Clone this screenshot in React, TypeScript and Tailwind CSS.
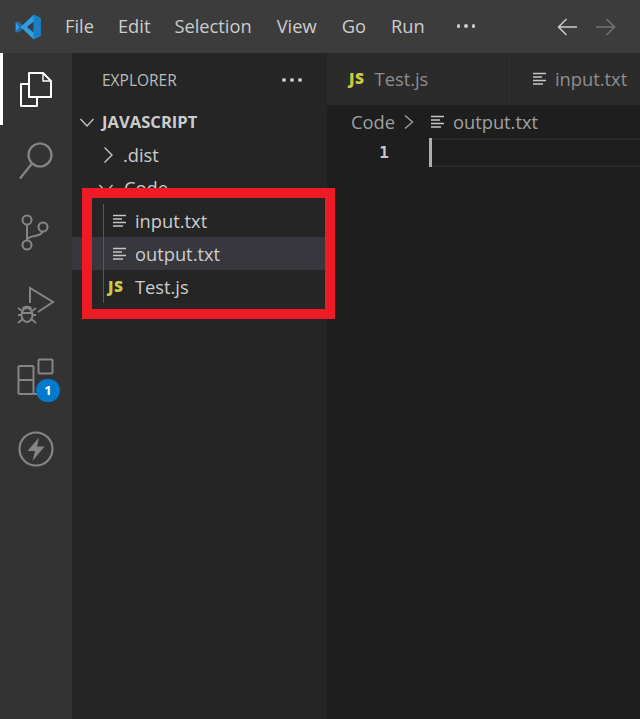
const font = "[font-family:'Open_Sans','Noto_Sans',sans-serif]";

function TextFileIcon({ className = "" }: { className?: string }) {
  return (
    <svg width="14" height="14" viewBox="0 0 14 14" className={className} fill="none" stroke="#c5c5c5" strokeWidth="1.7">
      <path d="M0 1.5H13M0 5H9M0 8.5H13M0 12H10" />
    </svg>
  );
}

function JsIcon() {
  return (
    <span className="text-[15.5px] leading-none font-extrabold text-[#cbcb41] tracking-[0.6px]">JS</span>
  );
}

function Chevron({ open }: { open?: boolean }) {
  return (
    <svg width="16" height="16" viewBox="0 0 16 16" fill="none" stroke="#c5c5c5" strokeWidth="1.4">
      {open ? <path d="M1.5 5l6.5 7 6.5-7" /> : <path d="M3.5 0.5l7.5 7.5-7.5 7.5" />}
    </svg>
  );
}

function VsLogo() {
  return (
    <svg width="26" height="26" viewBox="0 0 26 26">
      <path d="M18.5 0.8L25.5 4V22L18.5 25.2L7.5 14.8L2.8 18.6L0.6 17.4V8.6L2.8 7.4L7.5 11.2ZM18.7 7.4L11.8 13L18.7 18.6Z" fill="#2f9fe3" fillRule="evenodd" />
      <path d="M18.5 0.8L25.5 4V22L18.5 25.2V18.8L18.7 18.6V7.4L18.5 7.2Z" fill="#1a7fc9" />
      <path d="M2.8 7.4L0.6 8.6L4.5 13L0.6 17.4L2.8 18.6L7.5 14.8L5.6 13L7.5 11.2Z" fill="#1b6fb0" />
    </svg>
  );
}

function ActivityBar() {
  const stroke = "#858585";
  return (
    <div className="w-[72px] shrink-0 bg-[#333333] flex flex-col items-center relative">
      <div className="absolute left-0 top-0 w-[3px] h-[72px] bg-white" />
      <div className="h-[72px] w-full shrink-0 flex items-center justify-center">
        <svg width="34" height="36" viewBox="0 0 34 36" fill="none" stroke="#ffffff" strokeWidth="2" strokeLinejoin="round">
          <path d="M10 2H24L32 10V26H10Z" />
          <path d="M24 2V10H32" strokeWidth="1.4" />
          <path d="M10 13H2V35H18V26" />
        </svg>
      </div>
      <div className="h-[72px] w-full shrink-0 flex items-center justify-center">
        <svg width="36" height="38" viewBox="0 0 36 38" fill="none" stroke={stroke} strokeWidth="2.2">
          <circle cx="22" cy="13" r="11.5" />
          <path d="M14 21.5L2 36.5" />
        </svg>
      </div>
      <div className="h-[72px] w-full shrink-0 flex items-center justify-center">
        <svg width="30" height="38" viewBox="0 0 30 38" fill="none" stroke={stroke} strokeWidth="2">
          <circle cx="6" cy="6" r="4.5" />
          <circle cx="6" cy="31" r="4.5" />
          <circle cx="22" cy="13" r="4.5" />
          <path d="M6 10.5V26.5M6 26C8 20 20 24 21.5 17.5" />
        </svg>
      </div>
      <div className="h-[72px] w-full shrink-0 flex items-center justify-center">
        <svg width="38" height="40" viewBox="0 0 38 40" fill="none" stroke={stroke} strokeWidth="2">
          <path d="M13 18V3L36 17L21 27" />
          <ellipse cx="10" cy="30" rx="5.5" ry="7" />
          <path d="M4.5 28H15.5M1 23L5 26M19 23L15 26M1 30H4.5M15.5 30H19M1 38L5 34.5M19 38L15 34.5M6 24C6 21 14 21 14 24" strokeWidth="1.8" />
        </svg>
      </div>
      <div className="h-[72px] w-full shrink-0 flex items-center justify-center relative">
        <svg width="38" height="38" viewBox="0 0 38 38" fill="none" stroke={stroke} strokeWidth="2">
          <rect x="1.5" y="8" width="15" height="14" rx="1" />
          <rect x="1.5" y="22" width="15" height="14" rx="1" />
          <path d="M16.5 36H24" />
          <rect x="21.5" y="1.5" width="14" height="14" rx="1" />
        </svg>
        <span className="absolute left-[36px] top-[38px] w-[24px] h-[23px] rounded-full bg-[#007acc] flex items-center justify-center text-white text-[13px] font-bold leading-none">1</span>
      </div>
      <div className="h-[72px] w-full shrink-0 flex items-center justify-center">
        <svg width="36" height="36" viewBox="0 0 36 36" fill="none">
          <circle cx="18" cy="18" r="16.5" stroke={stroke} strokeWidth="2.2" />
          <path d="M21 6.5L9.5 20H17L14.5 30L26.5 15.5H19Z" fill={stroke} />
        </svg>
      </div>
    </div>
  );
}

function Row({ children, active, pad }: { children: React.ReactNode; active?: boolean; pad: string }) {
  return (
    <div className={`h-[33px] flex items-center ${pad} ${active ? "bg-[#37373d]" : ""}`}>{children}</div>
  );
}

function FileRow({ icon, name, active }: { icon: React.ReactNode; name: string; active?: boolean }) {
  return (
    <Row active={active} pad="pl-[36px]">
      <div className="w-[27px] flex justify-start">{icon}</div>
      <span className="text-[18.3px] text-[#cccccc]">{name}</span>
    </Row>
  );
}

function Sidebar() {
  return (
    <div className="w-[255px] shrink-0 bg-[#252526] flex flex-col">
      <div className="h-[52px] pt-[1px] pl-[30px] pr-[25px] flex items-center justify-between">
        <span className="text-[15.5px] pt-[3px] text-[#bbbbbb]">EXPLORER</span>
        <span className="flex gap-[4px]">
          <i className="w-[4px] h-[4px] rounded-full bg-[#c5c5c5]" />
          <i className="w-[4px] h-[4px] rounded-full bg-[#c5c5c5]" />
          <i className="w-[4px] h-[4px] rounded-full bg-[#c5c5c5]" />
        </span>
      </div>
      <div>
        <Row pad="pl-[7px] gap-[7px]">
          <Chevron open />
          <span className="text-[16.6px] pt-[2px] font-bold text-[#cccccc]">JAVASCRIPT</span>
        </Row>
        <Row pad="pl-[29px] gap-[6px]">
          <Chevron />
          <span className="text-[18.3px] text-[#cccccc]">.dist</span>
        </Row>
        <Row pad="pl-[26px] gap-[10px]">
          <Chevron open />
          <span className="text-[18.3px] text-[#cccccc]">Code</span>
        </Row>
        <div className="relative">
          <div className="absolute left-[31px] top-[0px] bottom-[0px] w-px bg-[#585858] z-10" />
          <FileRow icon={<TextFileIcon className="ml-[5px]" />} name="input.txt" />
          <FileRow icon={<TextFileIcon className="ml-[5px]" />} name="output.txt" active />
          <FileRow icon={<JsIcon />} name="Test.js" />
        </div>
      </div>
    </div>
  );
}

function Tab({ children, width }: { children: React.ReactNode; width: string }) {
  return <div className={`${width} shrink-0 h-full flex items-center border-r border-[#252526] bg-[#2b2b2b]`}>{children}</div>;
}

function Editor() {
  return (
    <div className="flex-1 min-w-0 bg-[#1e1e1e] flex flex-col overflow-hidden">
      <div className="h-[52px] flex shrink-0 bg-[#252526]">
        <Tab width="w-[180px]">
          <div className="pl-[22px] flex items-center gap-[10px]">
            <JsIcon />
            <span className="text-[18.3px] text-[#8d8d8d]">Test.js</span>
          </div>
        </Tab>
        <Tab width="w-[180px]">
          <div className="pl-[26px] flex items-center gap-[8px]">
            <TextFileIcon />
            <span className="text-[18.3px] text-[#8d8d8d] whitespace-nowrap">input.txt</span>
          </div>
        </Tab>
      </div>
      <div className="h-[33px] shrink-0 flex items-center pl-[24px] text-[18.3px] text-[#a0a0a0]">
        <span>Code</span>
        <svg width="10" height="16" viewBox="0 0 10 16" fill="none" stroke="#a0a0a0" strokeWidth="1.4" className="ml-[9px]">
          <path d="M1 1.5L8.5 8L1 14.5" />
        </svg>
        <TextFileIcon className="ml-[17px]" />
        <span className="ml-[8px]">output.txt</span>
      </div>
      <div className="h-[29px] shrink-0 flex">
        <div className="w-[62px] text-right text-[16px] font-bold text-[#c6c6c6] leading-[29px] [font-family:'DejaVu_Sans_Mono',monospace]">1</div>
        <div className="w-[3px] ml-[40px] bg-[#aeafad]" />
        <div className="flex-1 border-y-2 border-[#282828]" />
      </div>
    </div>
  );
}

export default function App() {
  return (
    <div className={`relative w-[640px] h-[719px] overflow-hidden flex flex-col bg-[#1e1e1e] ${font}`}>
      <div className="h-[53px] shrink-0 bg-[#3c3c3c] flex items-center text-[18.3px] text-[#cccccc]">
        <div className="pl-[15px] pt-[1px] w-[65px] shrink-0"><VsLogo /></div>
        <span className="pb-[2px]">File</span>
        <span className="ml-[24px] pb-[2px]">Edit</span>
        <span className="ml-[24px] pb-[2px]">Selection</span>
        <span className="ml-[25px] pb-[2px]">View</span>
        <span className="ml-[25px] pb-[2px]">Go</span>
        <span className="ml-[25px] pb-[2px]">Run</span>
        <span className="ml-[32px] pb-[1px] flex gap-[4px]">
          <i className="w-[3.5px] h-[3.5px] rounded-full bg-[#cccccc]" />
          <i className="w-[3.5px] h-[3.5px] rounded-full bg-[#cccccc]" />
          <i className="w-[3.5px] h-[3.5px] rounded-full bg-[#cccccc]" />
        </span>
        <svg width="20" height="18" viewBox="0 0 20 18" fill="none" stroke="#cccccc" strokeWidth="1.5" className="ml-[82px]">
          <path d="M20 9H1.5M9.5 1L1.5 9L9.5 17" />
        </svg>
        <svg width="20" height="18" viewBox="0 0 20 18" fill="none" stroke="#737373" strokeWidth="1.5" className="ml-[19px]">
          <path d="M0 9H18.5M10.5 1L18.5 9L10.5 17" />
        </svg>
      </div>
      <div className="flex-1 flex min-h-0">
        <ActivityBar />
        <Sidebar />
        <Editor />
      </div>
      <div className="absolute left-[82px] top-[188px] w-[253px] h-[131px] border-[10px] border-[#ed1c24]" />
    </div>
  );
}
